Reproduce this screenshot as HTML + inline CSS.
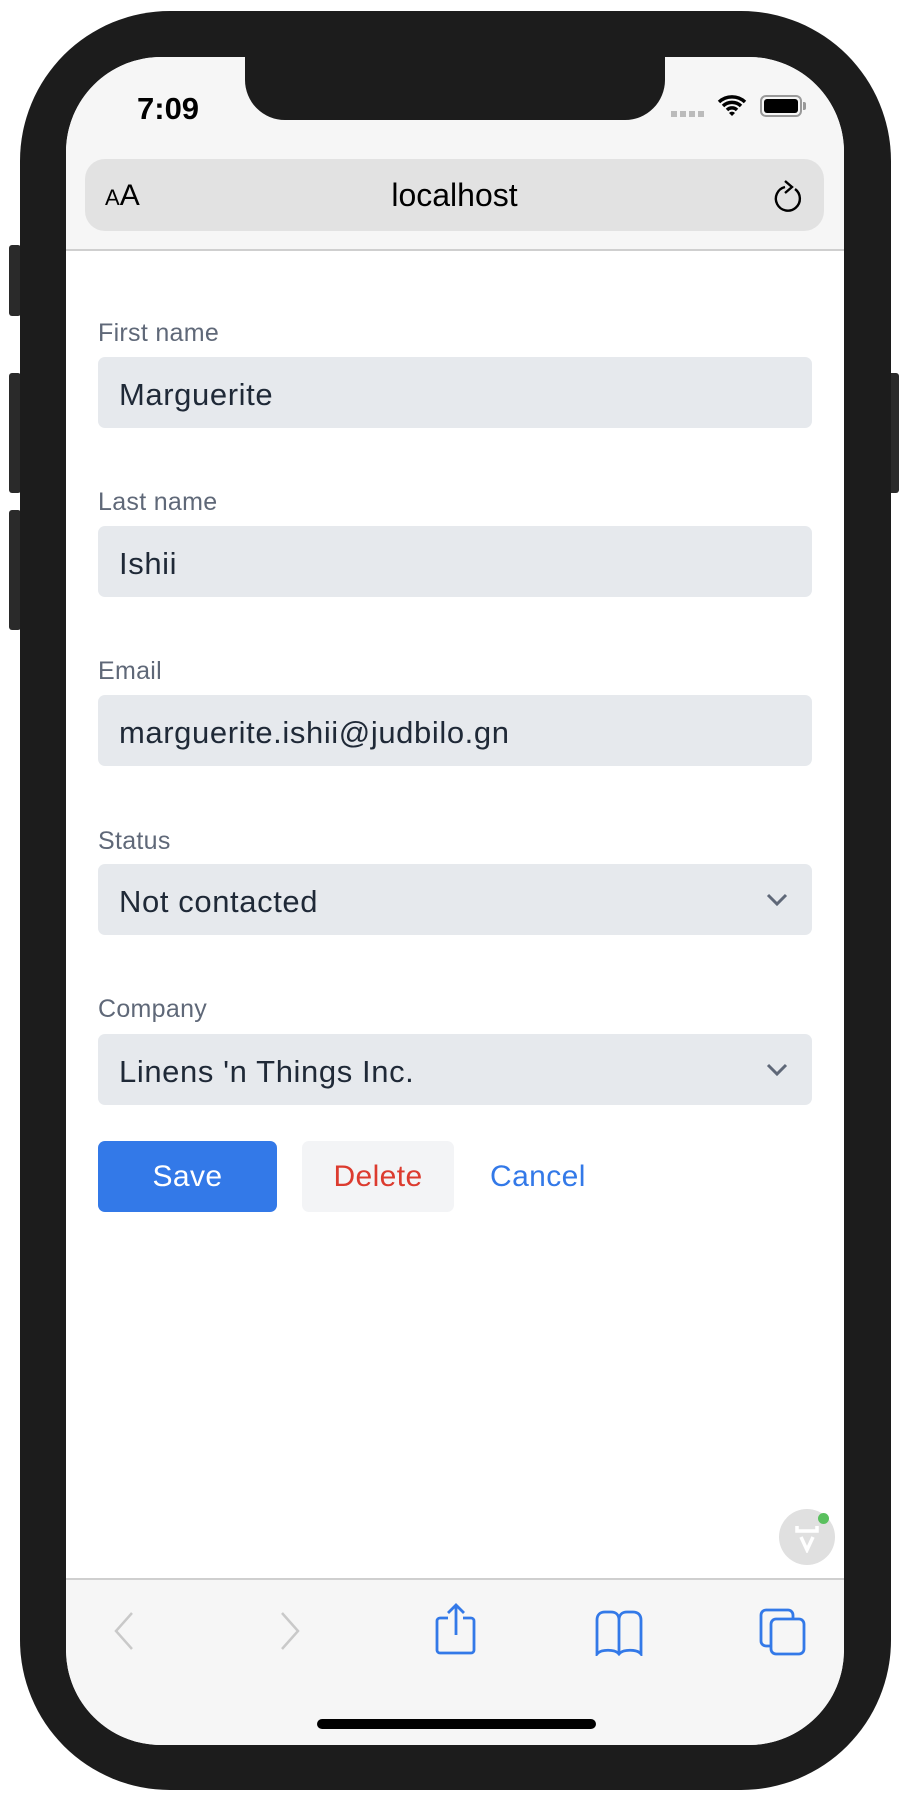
<!DOCTYPE html>
<html><head><meta charset="utf-8"><style>
*{margin:0;padding:0;box-sizing:border-box}
body{width:912px;height:1793px;background:#fff;position:relative;overflow:hidden;font-family:"Liberation Sans",sans-serif}
.phone{position:absolute;left:20px;top:11px;width:871px;height:1779px;background:#1c1c1c;border-radius:150px}
.btn{position:absolute;background:#2a2a2a;border-radius:3px}
.screen{position:absolute;left:66px;top:57px;width:778px;height:1688px;background:#fff;border-radius:95px;overflow:hidden}
.top{position:absolute;left:0;top:0;width:778px;height:194px;background:#f6f6f6;border-bottom:2px solid #cfcfcf}
.notch{position:absolute;left:179px;top:-5px;width:420px;height:68px;background:#1c1c1c;border-radius:0 0 40px 40px}
.time{position:absolute;left:71px;top:34px;font-size:31px;font-weight:bold;color:#000}
.url{position:absolute;left:19px;top:102px;width:739px;height:72px;background:#e2e2e2;border-radius:20px}
.url .t{position:absolute;left:0;width:100%;top:18px;text-align:center;font-size:32px;color:#000}
.url .aa{position:absolute;left:20px;top:20px;font-size:30px}
.form{position:absolute;left:32px;top:0}
.lbl{position:absolute;font-size:25px;color:#5f6878;white-space:nowrap;letter-spacing:0.3px}
.in{position:absolute;width:714px;height:71px;background:#e6e9ed;border-radius:7px;font-size:31px;letter-spacing:0.6px;color:#1f2937;padding:20px 0 0 21px;white-space:nowrap}
.chev{position:absolute;right:22px;top:22px}
.bottom{position:absolute;left:0;top:1521px;width:778px;height:170px;background:#f6f6f6;border-top:2px solid #cfcfcf}
.b{position:absolute;top:1084px;height:71px;font-size:30px;text-align:center;line-height:71px;border-radius:7px;letter-spacing:0.4px}
</style></head><body>
<div class="btn" style="left:9px;top:245px;width:12px;height:71px"></div>
<div class="btn" style="left:9px;top:373px;width:12px;height:120px"></div>
<div class="btn" style="left:9px;top:510px;width:12px;height:120px"></div>
<div class="btn" style="left:887px;top:373px;width:12px;height:120px"></div>
<div class="phone"></div>
<div class="screen">
 <div class="top">
  <div class="notch"></div>
  <div class="time">7:09</div>
  <div style="position:absolute;left:605px;top:54px;width:36px;height:6px;background:repeating-linear-gradient(90deg,#bbb 0 6px,transparent 6px 9px)"></div>
  <svg style="position:absolute;left:651px;top:36px" width="30" height="24" viewBox="0 0 30 24"><path d="M2 9a19 19 0 0 1 26 0M6 13a13 13 0 0 1 18 0M10 17a7 7 0 0 1 10 0" stroke="#000" stroke-width="3.5" fill="none"/><path d="M12 20l3 3 3-3a4 4 0 0 0-6 0z" fill="#000"/></svg>
  <div style="position:absolute;left:694px;top:38px;width:42px;height:22px;border:2px solid #999;border-radius:6px;padding:2px"><div style="width:100%;height:100%;background:#000;border-radius:3px"></div></div>
  <div style="position:absolute;left:737px;top:45px;width:3px;height:8px;background:#999;border-radius:0 2px 2px 0"></div>
  <div class="url"><span class="aa"><span style="font-size:22px">A</span>A</span><div class="t">localhost</div>
   <svg style="position:absolute;left:688px;top:20px" width="32" height="34" viewBox="0 0 32 34"><path d="M22 10A12 12 0 1 1 12 8" stroke="#000" stroke-width="2.4" fill="none"/><path d="M12 2l7 6-7 6" stroke="#000" stroke-width="2.4" fill="none"/></svg>
  </div>
 </div>
 <div class="form">
  <div class="lbl" style="top:262px">First name</div>
  <div class="in" style="top:300px">Marguerite</div>
  <div class="lbl" style="top:431px">Last name</div>
  <div class="in" style="top:469px">Ishii</div>
  <div class="lbl" style="top:600px">Email</div>
  <div class="in" style="top:638px">marguerite.ishii@judbilo.gn</div>
  <div class="lbl" style="top:770px">Status</div>
  <div class="in" style="top:807px">Not contacted<svg class="chev" width="26" height="26" viewBox="0 0 26 26"><path d="M4 9l9 9 9-9" stroke="#5f6878" stroke-width="3" fill="none"/></svg></div>
  <div class="lbl" style="top:938px">Company</div>
  <div class="in" style="top:977px">Linens 'n Things Inc.<svg class="chev" width="26" height="26" viewBox="0 0 26 26"><path d="M4 9l9 9 9-9" stroke="#5f6878" stroke-width="3" fill="none"/></svg></div>
  <div class="b" style="left:0;width:179px;background:#3379e8;color:#fff">Save</div>
  <div class="b" style="left:204px;width:152px;background:#f3f4f6;color:#dc3b2f">Delete</div>
  <div class="b" style="left:392px;color:#3379e8">Cancel</div>
 </div>
 <div style="position:absolute;left:713px;top:1452px;width:56px;height:56px;border-radius:50%;background:#e0e0e0"></div>
 <div style="position:absolute;left:752px;top:1456px;width:11px;height:11px;border-radius:50%;background:#5ac05e"></div>
 <svg style="position:absolute;left:727px;top:1466px" width="28" height="30" viewBox="0 0 28 30"><path d="M4 3v5h20v-5M8 14l6 13 6-13" stroke="#fff" stroke-width="3.5" fill="none"/></svg>
 <div class="bottom">
  <svg style="position:absolute;left:46px;top:30px" width="24" height="42" viewBox="0 0 24 42"><path d="M20 3L4 21l16 18" stroke="#c9c9c9" stroke-width="2.5" fill="none"/></svg>
  <svg style="position:absolute;left:212px;top:30px" width="24" height="42" viewBox="0 0 24 42"><path d="M4 3l16 18L4 39" stroke="#c9c9c9" stroke-width="2.5" fill="none"/></svg>
  <svg style="position:absolute;left:368px;top:22px" width="44" height="54" viewBox="0 0 44 54"><path d="M14 16H6a3 3 0 0 0-3 3v29a3 3 0 0 0 3 3h31a3 3 0 0 0 3-3V19a3 3 0 0 0-3-3h-8M22 33V3M14 11l8-8 8 8" stroke="#3379e8" stroke-width="2.8" fill="none"/></svg>
  <svg style="position:absolute;left:528px;top:30px" width="50" height="46" viewBox="0 0 50 46"><path d="M25 44V10c0-5-3-8-8-8h-6C6 2 3 5 3 10v34c4-5 18-5 22 0c4-5 18-5 22 0V10c0-5-3-8-8-8h-6c-5 0-8 3-8 8" stroke="#3379e8" stroke-width="2.8" fill="none"/></svg>
  <svg style="position:absolute;left:693px;top:28px" width="48" height="48" viewBox="0 0 48 48"><rect x="2" y="2" width="32" height="36" rx="5" stroke="#3379e8" stroke-width="2.8" fill="none"/><rect x="12" y="11" width="33" height="35" rx="5" stroke="#3379e8" stroke-width="2.8" fill="#f6f6f6"/></svg>
  <div style="position:absolute;left:251px;top:139px;width:279px;height:10px;background:#000;border-radius:5px"></div>
 </div>
</div>
</body></html>
